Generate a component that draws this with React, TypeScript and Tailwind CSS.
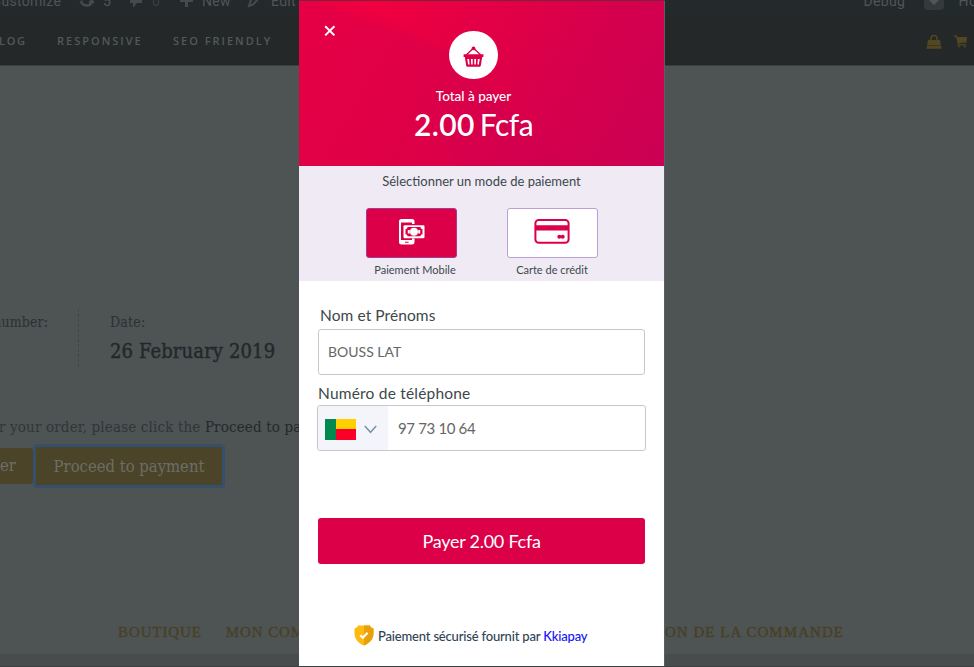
import React from "react";

function BasketIcon() {
  return (
    <svg width="21" height="21" viewBox="0 0 21 21" fill="none">
      <path d="M3.500 8.800 9.600 3M17.500 8.800 11.400 3" stroke="#dc0048" strokeWidth="1.300" />
      <circle cx="10.500" cy="2.400" r="1.900" fill="#dc0048" />
      <path
        fillRule="evenodd"
        fill="#dc0048"
        d="M.6 8.200h19.800v2.800h-1.200l-1.400 8.600c-.1.900-.6 1.200-1.300 1.200h-12c-.7 0-1.200-.3-1.300-1.200L1.800 11H.6zM4.300 13l.8 5.400h1.500L6.100 13zM7.900 13l.3 5.400h1.500V13zM11.300 13v5.400h1.500l.3-5.400zM14.900 13l-.5 5.400h1.500l.8-5.400z"
      />
    </svg>
  );
}

function MobileMoneyIcon() {
  return (
    <svg width="27" height="26" viewBox="0 0 27 26" fill="none">
      <path
        fillRule="evenodd"
        fill="#fff"
        d="M3.500 0h10.500a2.500 2.500 0 0 1 2.500 2.500V5H14V3.500H3v17.500h11V19.500h2.500v3.500a2.500 2.500 0 0 1-2.500 2.500H3.500A2.500 2.500 0 0 1 1 23V2.500A2.500 2.500 0 0 1 3.500 0zM7 22.700v1.100h3.600v-1.100z"
      />
      <rect x="5.500" y="6.200" width="21" height="13" rx="1.200" fill="#fff" />
      <path
        d="M9.500 8h13c0 1.300.8 2.200 2 2.200v5c-1.200 0-2 .8-2 2.100h-13c0-1.300-.8-2.100-2-2.100v-5c1.200 0 2-.9 2-2.200z"
        fill="#dc0048"
      />
      <circle cx="16" cy="12.700" r="4" fill="#fff" />
      <path d="M10.800 10.900v3.600M21.200 10.900v3.600" stroke="#fff" strokeWidth="2" />
    </svg>
  );
}

function CardIcon() {
  return (
    <svg width="36" height="26" viewBox="0 0 36 26" fill="none">
      <rect x="1.400" y="1" width="33.200" height="22.800" rx="3.300" stroke="#dc0048" strokeWidth="2" />
      <path d="M1 6.200h34v5.300H1z" fill="#dc0048" />
      <circle cx="25.300" cy="17.700" r="2" fill="#dc0048" />
      <circle cx="28.700" cy="17.700" r="2" fill="#dc0048" />
    </svg>
  );
}

function ShieldIcon() {
  return (
    <svg width="20" height="21" viewBox="0 0 20 21">
      <path d="M4 .4h12c.5 1.700 1.700 2.600 3.500 3v5.200c0 5.800-4.300 10-9.500 12C4.800 18.600.5 14.400.5 8.600V3.400C2.300 3 3.500 2.100 4 .4z" fill="#fdbb11" />
      <path d="M10 .4h6c.5 1.700 1.700 2.600 3.500 3v5.200c0 5.800-4.300 10-9.500 12z" fill="#e9a00b" />
      <path d="m6.300 10.200 2.500 2.500 4.800-5" fill="none" stroke="#fff" strokeWidth="2.200" />
    </svg>
  );
}

function AdminBar() {
  return (
    <div className="flex h-[15px] shrink-0 justify-between overflow-hidden bg-[#232a2c] font-['Roboto',sans-serif] text-[14px] leading-[16px] tracking-[0.3px] text-[#505557]">
      <div className="-mt-[7px] -ml-[8px] flex">
        <span className="w-[86px] tracking-[0.300px]">Customize</span>
        <svg width="25" height="16" viewBox="0 0 25 16" fill="none">
          <path d="M1 6h5M11 9h5M3 8c1 5 8 6 10.500 2M4 4c3-4 8-3 10 4" stroke="#454a4c" strokeWidth="2.400" />
        </svg>
        <span className="w-[26px]">5</span>
        <svg width="23" height="16" viewBox="0 0 23 16">
          <path d="M1 0h12v10H8l-4 5v-5H1z" fill="#454a4c" />
        </svg>
        <span className="w-[28px] text-[#3b4042]">0</span>
        <svg width="22" height="16" viewBox="0 0 22 16">
          <path d="M5 1h3v5h5v3H8v5H5V9H0V6h5z" fill="#454a4c" />
        </svg>
        <span className="w-[45px]">New</span>
        <svg width="24" height="16" viewBox="0 0 24 16" fill="none">
          <path d="m2 13 1.500-5L10 1l3 3-7 7.500z" stroke="#454a4c" strokeWidth="2" />
        </svg>
        <span>Edit</span>
      </div>
      <div className="-mt-[7px] -mr-[14px] flex">
        <span className="w-[60px]">Debug</span>
        <span className="flex h-[17px] w-[20px] justify-center rounded-sm bg-[#34393b]">
          <svg width="12" height="16" viewBox="0 0 12 16">
            <path d="M4 0h4v6h4l-6 6-6-6h4z" fill="#505557" />
          </svg>
        </span>
        <span className="ml-[15px]">How</span>
      </div>
    </div>
  );
}

function SiteNav() {
  return (
    <nav className="flex h-[51px] shrink-0 items-center justify-between border-b border-[#3b3f40] bg-[#242829] font-['Open_Sans',sans-serif] text-[11px] font-semibold text-[#53585a]">
      <div className="-ml-[10px] flex pt-[2px]">
        <span className="w-[67px] tracking-[1.700px]">BLOG</span>
        <span className="w-[116px] tracking-[2px]">RESPONSIVE</span>
        <span className="tracking-[2px]">SEO FRIENDLY</span>
      </div>
      <div className="flex gap-[12px] pr-[6px] pt-[3px]">
        <svg width="16" height="16" viewBox="0 0 16 16">
          <path d="M2 6h12l1 5.500H1zM.8 12h14.400l.3 2.800H.5z" fill="#514821" />
          <path d="M5 8V4.500a3 3 0 0 1 6 0V8" fill="none" stroke="#514821" strokeWidth="1.500" />
        </svg>
        <svg width="14" height="14" viewBox="0 0 14 14">
          <path d="M0 1.500h3l.5 1.500H13l-.6 5.500-7.400.7.300 1H12v1.300H4L2.200 3H0z" fill="#514821" />
          <circle cx="5" cy="12.400" r="1" fill="#514821" />
          <circle cx="11" cy="12.400" r="1" fill="#514821" />
        </svg>
      </div>
    </nav>
  );
}

function StorePage() {
  return (
    <div className="flex h-full flex-col overflow-hidden whitespace-nowrap font-['Liberation_Serif',serif]">
      <AdminBar />
      <SiteNav />
      <main className="flex-1 pt-[243px] font-['DejaVu_Serif_Condensed','DejaVu_Serif',serif]">
        <div className="flex h-[58px] text-[#2b3133]">
          <div className="flex w-[79px] justify-end border-r border-dashed border-[#424647] pr-[30px] pt-[3px] text-[14px] leading-[20px] tracking-[0.100px]">
            <span>number:</span>
          </div>
          <div className="pl-[31px] pt-[3px]">
            <div className="text-[14px] leading-[20px] tracking-[0.200px]">Date:</div>
            <div className="pt-[4px] text-[20px] leading-[30px] tracking-[0.120px] text-[#22282a] [-webkit-text-stroke:0.4px_#22282a]">26 February 2019</div>
          </div>
        </div>
        <p className="-ml-[1px] mt-[49px] h-[22px] text-[15px] leading-[22px] tracking-[0.150px] text-[#303638]">
          r your order, please click the <span className="text-[#24292b]">Proceed to payment</span>
        </p>
        <div className="mt-[6px] flex items-center text-[16.500px] leading-[36px] text-[#6b6e68]">
          <span className="h-[36px] w-[33px] rounded-r-[3px] bg-[#4b4428]">er</span>
          <button className="h-[44px] w-[192px] rounded-[4px] border-[3px] border-[#35506c] bg-[#4b4428] pt-[2px]">Proceed to payment</button>
        </div>
      </main>
      <footer className="flex h-[33px] shrink-0 justify-between pl-[118px] pr-[130px] text-[15px] leading-[22px] tracking-[0.900px] text-[#484023] [-webkit-text-stroke:0.3px_#484023]">
        <div className="flex gap-[24px]">
          <span>BOUTIQUE</span>
          <span>MON COMPTE</span>
        </div>
        <span className="tracking-[1.050px]">VALIDATION DE LA COMMANDE</span>
      </footer>
      <div className="h-[13px] shrink-0 border-b border-[#3d4041] bg-[#494c4d]" />
    </div>
  );
}

function PaymentDialog() {
  return (
    <div className="flex h-[665px] w-[366px] flex-col whitespace-nowrap border-r border-[#5b5f60] bg-white text-[#3c484b]">
      <header className="relative flex h-[165px] shrink-0 flex-col items-center overflow-hidden bg-[linear-gradient(119deg,#e60044_0%,#dc0048_50%,#cb0054_100%)] text-white">
        <svg className="absolute inset-0" width="365" height="165" viewBox="0 0 365 165">
          <defs>
            <linearGradient id="beam" gradientUnits="userSpaceOnUse" x1="60" y1="0" x2="260" y2="110">
              <stop offset="0" stopColor="#f5003d" stopOpacity=".9" />
              <stop offset="1" stopColor="#e00048" stopOpacity="0" />
            </linearGradient>
            <linearGradient id="shade" gradientUnits="userSpaceOnUse" x1="50" y1="20" x2="230" y2="165">
              <stop offset="0" stopColor="#e60044" stopOpacity=".5" />
              <stop offset="1" stopColor="#cf0050" stopOpacity=".6" />
            </linearGradient>
          </defs>
          <path d="M20 0h345v165h-92L150 52z" fill="url(#beam)" />
          <path d="M20 0h35L150 52 272 165H158L112 90z" fill="url(#shade)" />
        </svg>
        <svg className="absolute left-[25px] top-[24px]" width="12" height="12" viewBox="0 0 12 12">
          <path d="m1.200 1.200 9.200 9.200m0-9.200-9.200 9.200" stroke="#fff" strokeWidth="2" />
        </svg>
        <div className="relative -ml-[16px] mt-[30px] flex h-[48px] w-[49px] shrink-0 items-center justify-center rounded-full bg-white pt-[2px]">
          <BasketIcon />
        </div>
        <div className="relative -ml-[16px] mt-[7px] text-[13.500px] font-medium leading-[20px]">Total à payer</div>
        <div className="relative -ml-[16px] text-[30px] leading-[36px] tracking-[-0.500px]">
          <span className="font-semibold tracking-[0.400px]">2.00</span>
          <span className="pl-[5px]">Fcfa</span>
        </div>
      </header>
      <section className="flex h-[115px] shrink-0 flex-col items-center bg-[#f0eaf5]">
        <h2 className="pt-[5px] text-[13px] leading-[20px]">Sélectionner un mode de paiement</h2>
        <div className="flex gap-[50px] pt-[17px] text-[11px] leading-[16px]">
          <div className="flex w-[91px] flex-col items-center">
            <button className="flex h-[50px] w-[91px] items-center justify-center rounded-[3px] border border-[#a63c8c] bg-[#dc0048] pb-[3px]">
              <MobileMoneyIcon />
            </button>
            <span className="ml-[8px] pt-[4px]">Paiement Mobile</span>
          </div>
          <div className="flex w-[91px] flex-col items-center">
            <button className="flex h-[50px] w-[91px] items-center justify-center rounded-[3px] border border-[#baa0d4] bg-white pb-[2px]">
              <CardIcon />
            </button>
            <span className="pt-[4px]">Carte de crédit</span>
          </div>
        </div>
      </section>
      <form className="flex flex-col px-[19px] pt-[23px]">
        <label className="pl-[2px] text-[15.500px] leading-[22px] tracking-[0.080px]">Nom et Prénoms</label>
        <div className="mt-[3px] flex h-[46px] w-[327px] items-center rounded-[3px] border border-[#c3c8ca] pb-[1px] pl-[9px] text-[14px] text-[#666]">BOUSS LAT</div>
        <label className="mt-[7px] text-[15.500px] leading-[22px] tracking-[0.200px]">Numéro de téléphone</label>
        <div className="-ml-[1px] mt-[1px] flex h-[46px] w-[329px] items-center rounded-[3px] border border-[#c3c8ca] text-[15px] text-[#666]">
          <div className="flex h-full w-[70px] items-center rounded-l-[3px] bg-[#f4f5fa] pl-[7px] pt-[2px]">
            <div className="flex h-[21px] w-[31px]">
              <div className="w-[11px] bg-[#008a50]" />
              <div className="flex flex-1 flex-col">
                <div className="h-[10px] bg-[#ffd000]" />
                <div className="flex-1 bg-[#fa0028]" />
              </div>
            </div>
            <svg className="ml-[8px]" width="13" height="9" viewBox="0 0 13 9" fill="none">
              <path d="m.8 1 5.700 6.200L12.200 1" stroke="#7d95a8" strokeWidth="1.600" />
            </svg>
          </div>
          <span className="pl-[10px] tracking-[-0.350px]">97 73 10 64</span>
        </div>
        <button className="mt-[67px] h-[46px] w-[327px] rounded-[3px] bg-[#dc0048] text-[18px] tracking-[-0.250px] text-white">Payer 2.00 Fcfa</button>
      </form>
      <div className="mt-[61px] flex items-center pl-[55px] text-[13px] font-medium leading-[20px] tracking-[-0.180px] text-[#2f4556]">
        <ShieldIcon />
        <span className="pl-[4px]">
          Paiement sécurisé fournit par <span className="text-[#1414f5]">Kkiapay</span>
        </span>
      </div>
    </div>
  );
}

export default function App() {
  return (
    <div className="relative h-[667px] w-[974px] overflow-hidden bg-[#4e5354]">
      <StorePage />
      <div className="absolute inset-0 flex pl-[299px] font-['Lato',sans-serif]">
        <div className="h-[666px] border-t border-[#7d2238]">
          <PaymentDialog />
        </div>
      </div>
    </div>
  );
}
